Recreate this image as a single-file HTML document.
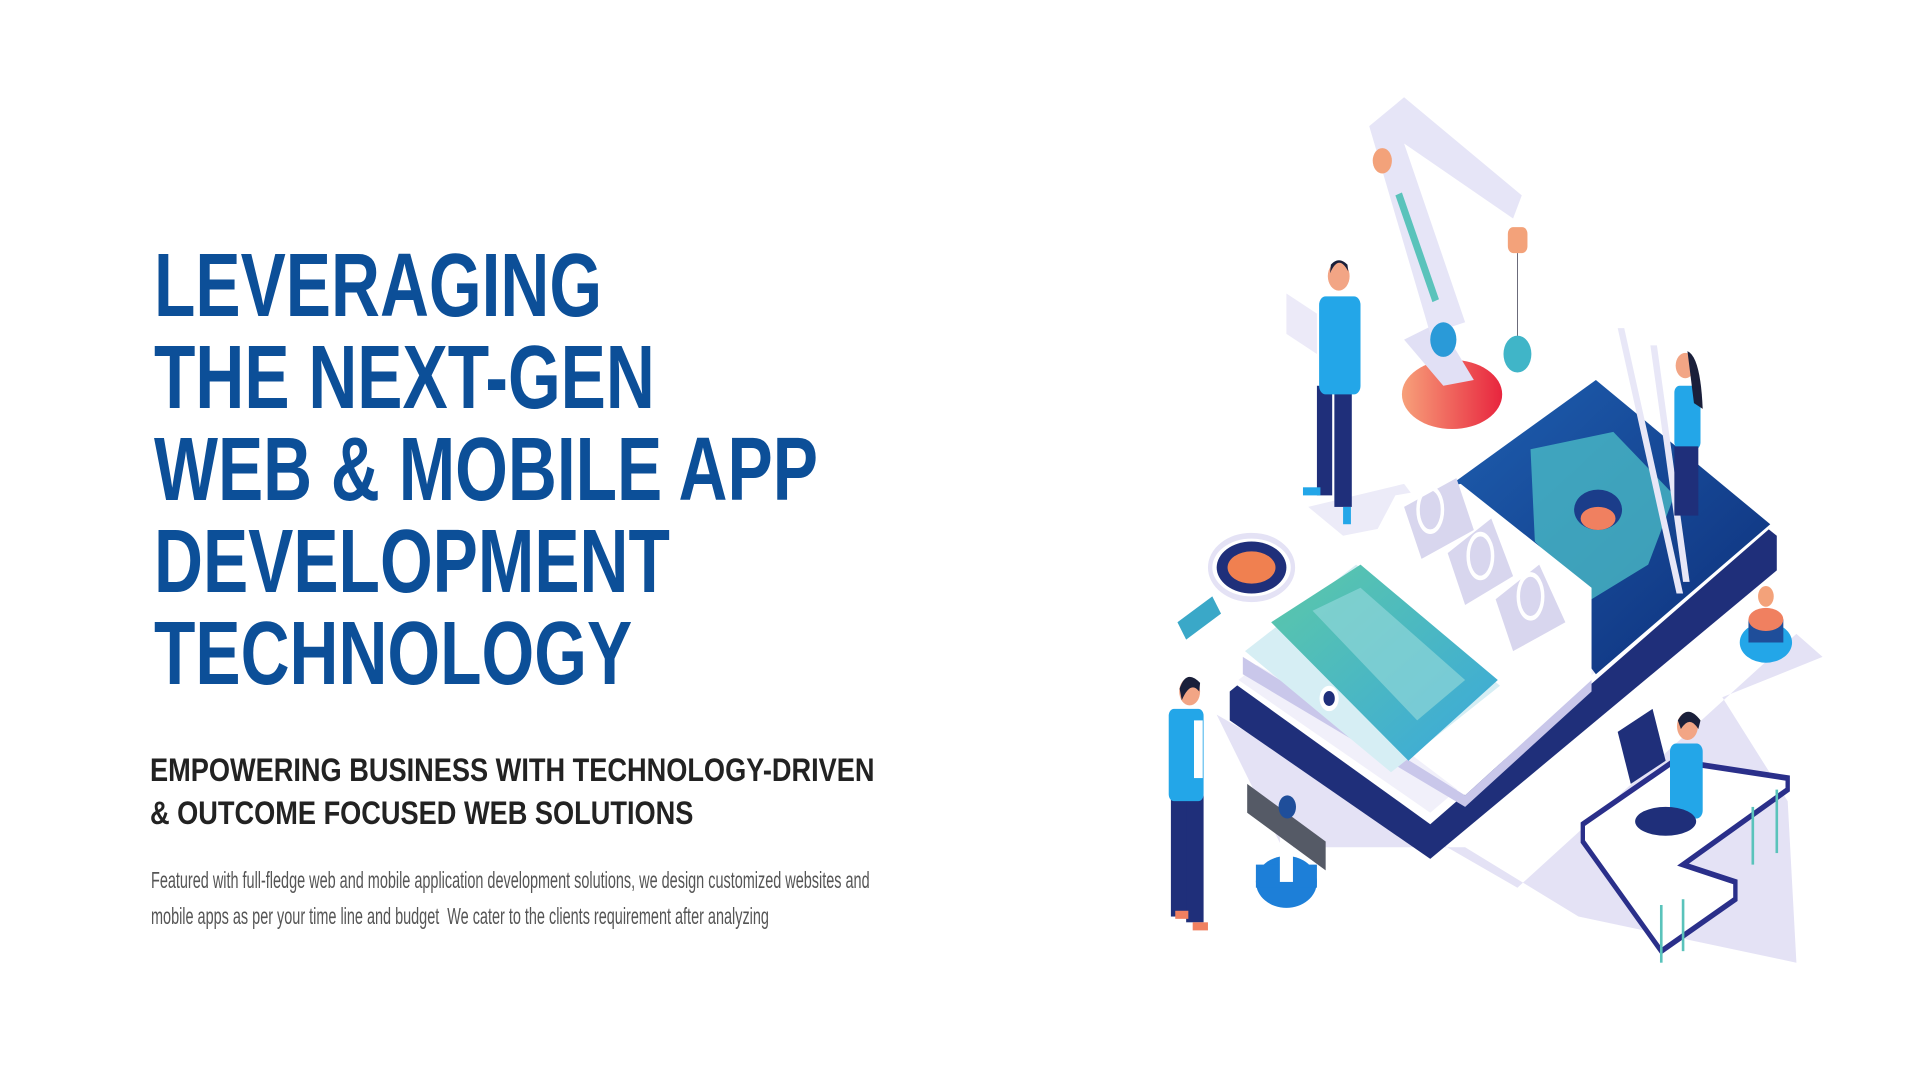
<!DOCTYPE html>
<html><head><meta charset="utf-8"><style>
html,body{margin:0;padding:0;background:#fff;width:1920px;height:1080px;overflow:hidden;position:relative}
.h{position:absolute;left:154px;top:240px;font-family:"Liberation Sans",sans-serif;font-weight:bold;color:#0c4f98;font-size:90px;line-height:92px;transform:scaleX(0.753);transform-origin:left top;white-space:nowrap;letter-spacing:0px}
.s{position:absolute;left:150px;top:749px;font-family:"Liberation Sans",sans-serif;font-weight:bold;color:#222;font-size:32px;line-height:43px;transform:scaleX(0.849);transform-origin:left top;white-space:nowrap}
.p{position:absolute;left:151px;top:862px;font-family:"Liberation Sans",sans-serif;color:#555;font-size:23px;line-height:36px;transform:scaleX(0.628);transform-origin:left top;white-space:nowrap}
svg{position:absolute;left:1160px;top:80px}
</style></head><body>
<div class="h">LEVERAGING<br>THE NEXT-GEN<br>WEB &amp; MOBILE APP<br>DEVELOPMENT<br>TECHNOLOGY</div>
<div class="s">EMPOWERING BUSINESS WITH TECHNOLOGY-DRIVEN<br>&amp; OUTCOME FOCUSED WEB SOLUTIONS</div>
<div class="p">Featured with full-fledge web and mobile application development solutions, we design customized websites and<br>mobile apps as per your time line and budget &nbsp;We cater to the clients requirement after analyzing</div>
<svg width="680" height="900" viewBox="0 0 1560 1560" preserveAspectRatio="none">
<defs>
<linearGradient id="tl" x1="0" y1="0" x2="1" y2="1"><stop offset="0" stop-color="#5cc8a8"/><stop offset="1" stop-color="#3aa8dc"/></linearGradient>
<linearGradient id="rd" x1="0" y1="0" x2="1" y2="0"><stop offset="0" stop-color="#f7a07a"/><stop offset="1" stop-color="#e8253e"/></linearGradient>
<linearGradient id="sc" x1="0" y1="0" x2="1" y2="1"><stop offset="0" stop-color="#1e5fb0"/><stop offset="1" stop-color="#0e2f7a"/></linearGradient>
</defs>
<polygon points="130,1100 820,1400 1460,960 1520,1000 1290,1070 1440,1250 1460,1530 960,1450 700,1330 280,1330" fill="#e4e2f5"/>
<polygon points="340,740 560,700 620,760 420,790" fill="#ecebf8"/>
<polygon points="160,1060 1000,540 1415,790 1415,850 620,1350 160,1110" fill="#1f2f7a"/>
<polygon points="160,1040 1000,520 1410,770 620,1290" fill="#ffffff"/>
<polygon points="180,1040 1000,540 1390,775 620,1270" fill="#f1f0fa"/>
<polygon points="670,700 1000,520 1400,770 1000,1030" fill="url(#sc)"/>
<polygon points="850,640 1040,610 1180,720 1120,840 990,900 860,800" fill="#4cc0c8" opacity=".75"/>
<ellipse cx="1005" cy="745" rx="55" ry="35" fill="#1b3d8a"/>
<ellipse cx="1005" cy="760" rx="40" ry="20" fill="#f08060"/>
<polygon points="540,720 690,700 990,880 990,1040 700,1240 560,1160 190,1000 190,980 470,820" fill="#ffffff"/>
<polygon points="560,740 680,690 720,780 600,830" fill="#d8d6ee"/>
<polygon points="660,820 760,760 810,860 700,910" fill="#d8d6ee"/>
<polygon points="770,900 870,840 930,940 810,990" fill="#d8d6ee"/>
<ellipse cx="620" cy="745" rx="28" ry="38" fill="none" stroke="#fff" stroke-width="8"/>
<ellipse cx="735" cy="825" rx="28" ry="38" fill="none" stroke="#fff" stroke-width="8"/>
<ellipse cx="850" cy="895" rx="28" ry="38" fill="none" stroke="#fff" stroke-width="8"/>
<polygon points="190,1000 700,1240 990,1040 990,1060 700,1260 190,1030" fill="#c9c7ea"/>
<polygon points="195,990 450,840 780,1050 530,1200" fill="#d6eef4"/>
<polygon points="255,940 460,840 775,1040 570,1180" fill="url(#tl)"/>
<polygon points="350,920 460,880 700,1040 590,1110" fill="#8fd6d8" opacity=".7"/>
<circle cx="388" cy="1072" r="22" fill="#fff"/><circle cx="388" cy="1072" r="13" fill="#1f2f7a"/>
<ellipse cx="670" cy="545" rx="115" ry="60" fill="url(#rd)"/>
<polygon points="560,450 640,420 720,520 650,530" fill="#e1e0f5"/>
<polygon points="480,80 560,30 830,200 810,240 560,110 700,420 620,440" fill="#e6e5f7"/>
<polygon points="540,200 555,195 640,380 625,385" fill="#5ac3bb"/>
<circle cx="650" cy="450" r="30" fill="#2a9ad8"/><circle cx="510" cy="140" r="22" fill="#f3a27a"/>
<rect x="798" y="255" width="45" height="45" rx="12" fill="#f3a27a"/>
<line x1="820" y1="300" x2="820" y2="450" stroke="#556" stroke-width="2"/>
<circle cx="820" cy="475" r="32" fill="#40b5c8"/>
<rect x="360" y="530" width="35" height="190" fill="#1f2f7a"/><rect x="400" y="530" width="40" height="210" fill="#1f2f7a"/>
<rect x="365" y="375" width="95" height="170" rx="15" fill="#23a6e8"/>
<circle cx="410" cy="340" r="25" fill="#f2a585"/><path d="M390 335 Q410 300 432 332 L430 320 Q410 305 392 320Z" fill="#1a1f3a"/>
<polygon points="290,370 360,405 360,475 290,440" fill="#eceaf8"/>
<rect x="328" y="706" width="40" height="14" fill="#23a6e8"/><rect x="420" y="740" width="18" height="30" fill="#23a6e8"/>
<polygon points="1050,430 1065,430 1200,890 1185,890" fill="#e8e7f7"/><polygon points="1125,460 1140,460 1215,870 1200,870" fill="#e8e7f7"/>
<rect x="1180" y="530" width="60" height="110" rx="12" fill="#23a6e8"/>
<rect x="1180" y="635" width="55" height="120" fill="#1f2f7a"/>
<circle cx="1205" cy="495" r="22" fill="#f2a585"/><path d="M1210 470 Q1240 480 1245 570 L1225 560 Z" fill="#1a1f3a"/>
<ellipse cx="210" cy="845" rx="95" ry="55" fill="#fff" stroke="#e4e2f5" stroke-width="10"/>
<ellipse cx="210" cy="845" rx="80" ry="45" fill="#1f2f7a"/><ellipse cx="210" cy="845" rx="55" ry="28" fill="#f08050"/>
<polygon points="40,940 120,895 140,925 60,970" fill="#3aa8c8"/>
<ellipse cx="1390" cy="975" rx="60" ry="35" fill="#23a6e8"/><rect x="1350" y="935" width="80" height="40" fill="#1f4e9a"/><ellipse cx="1390" cy="935" rx="40" ry="20" fill="#f08060"/><circle cx="1390" cy="895" r="18" fill="#f3a27a"/>
<rect x="25" y="1240" width="38" height="210" fill="#1f2f7a"/><rect x="60" y="1240" width="40" height="220" fill="#1f2f7a"/>
<rect x="20" y="1090" width="80" height="160" rx="12" fill="#23a6e8"/><rect x="78" y="1110" width="20" height="100" fill="#fff"/>
<circle cx="68" cy="1060" r="24" fill="#f2a585"/><path d="M45 1055 Q60 1020 92 1045 L90 1060 Q70 1040 50 1075Z" fill="#1a1f3a"/>
<rect x="35" y="1440" width="30" height="14" fill="#f08060"/><rect x="75" y="1460" width="35" height="14" fill="#f08060"/>
<ellipse cx="290" cy="1390" rx="70" ry="45" fill="#1d7fd8"/><rect x="220" y="1360" width="140" height="40" fill="#1d7fd8"/>
<rect x="275" y="1280" width="30" height="110" fill="#fff"/>
<polygon points="200,1220 380,1320 380,1370 200,1270" fill="#555a66"/>
<ellipse cx="292" cy="1260" rx="20" ry="20" fill="#1f4e9a"/>
<polygon points="970,1290 1180,1180 1440,1210 1440,1230 1200,1360 1320,1390 1320,1420 1150,1510 970,1320" fill="#fff" stroke="#2a2f8a" stroke-width="10"/>
<line x1="1360" y1="1260" x2="1360" y2="1360" stroke="#5ac3bb" stroke-width="6"/><line x1="1415" y1="1230" x2="1415" y2="1340" stroke="#5ac3bb" stroke-width="6"/>
<line x1="1150" y1="1430" x2="1150" y2="1530" stroke="#5ac3bb" stroke-width="6"/><line x1="1200" y1="1420" x2="1200" y2="1510" stroke="#5ac3bb" stroke-width="6"/>
<polygon points="1050,1130 1130,1090 1160,1180 1080,1220" fill="#1f2f7a"/>
<rect x="1170" y="1150" width="75" height="130" rx="14" fill="#23a6e8"/>
<ellipse cx="1160" cy="1285" rx="70" ry="25" fill="#1f2f7a"/>
<circle cx="1210" cy="1120" r="24" fill="#f2a585"/><path d="M1188 1110 Q1210 1080 1240 1110 L1235 1125 Q1215 1100 1195 1125Z" fill="#1a1f3a"/>
</svg>
</body></html>
